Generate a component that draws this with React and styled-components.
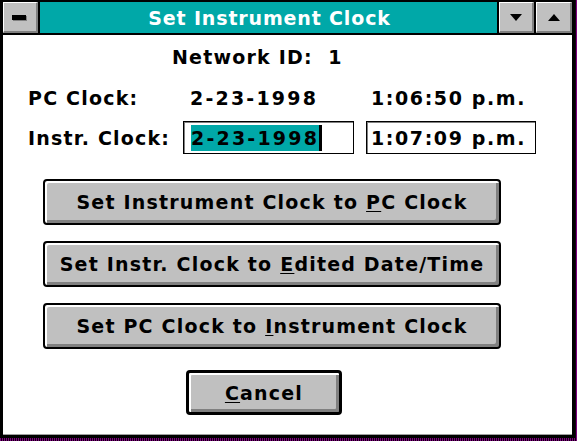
import React from "react";
import styled, { createGlobalStyle } from "styled-components";

const Global = createGlobalStyle`
  html, body { margin: 0; padding: 0; }
  body {
    width: 577px;
    height: 441px;
    overflow: hidden;
    background: repeating-linear-gradient(90deg, #800080 0 1px, #100010 1px 2px);
    font-family: "DejaVu Sans", "Liberation Sans", sans-serif;
  }
`;

const Window = styled.div`
  box-sizing: border-box;
  width: 575px;
  height: 438px;
  border-style: solid;
  border-color: #000;
  border-width: 2px 3px 3px 3px;
  background: #fff;
  display: flex;
  flex-direction: column;
`;

const TitleBar = styled.div`
  height: 31px;
  display: flex;
  border-bottom: 2px solid #000;
  background: #00a8a8;
  flex-shrink: 0;
`;

const CtlBox = styled.div`
  box-sizing: border-box;
  width: ${(p) => p.$w}px;
  height: 31px;
  background: #c0c0c0;
  border-style: solid;
  border-color: #fff #808080 #808080 #fff;
  border-width: 1px 2px 2px 1px;
  display: flex;
  align-items: center;
  justify-content: center;
`;

const Sep = styled.div`
  width: 2px;
  background: #000;
`;

const SysBar = styled.div`
  width: 14px;
  height: 5px;
  background: #000;
  box-shadow: 1px 1px 0 #808080;
  margin-left: -2px;
`;

const TitleText = styled.div`
  flex: 1;
  color: #fff;
  font-weight: bold;
  font-size: 19px;
  letter-spacing: 0.85px;
  display: flex;
  align-items: center;
  justify-content: center;
  padding-left: 2px;
`;

const Content = styled.div`
  flex: 1;
  display: flex;
  flex-direction: column;
  padding-left: 25px;
  border-bottom: 1px solid #a0a0a0;
`;

const Label = styled.div`
  font-weight: bold;
  font-size: 19px;
  letter-spacing: ${(p) => p.$ls ?? 1.2}px;
  color: #000;
  white-space: pre;
  padding-left: ${(p) => p.$pl || 0}px;
`;

const NetRow = styled.div`
  height: 44px;
  display: flex;
  align-items: center;
  padding-left: 144px;
`;

const Row = styled.div`
  display: grid;
  grid-template-columns: 155px 183px 170px;
  align-items: center;
  height: ${(p) => p.$h}px;
  margin-top: ${(p) => p.$mt || 0}px;
`;

const Field = styled.div`
  box-sizing: border-box;
  width: ${(p) => p.$w}px;
  height: 33px;
  border: 1px solid #000;
  box-shadow: inset 1px 1px 0 #808080;
  display: flex;
  align-items: center;
  padding-left: ${(p) => p.$pl}px;
`;

const Sel = styled.span`
  background: #00a8a8;
  color: #000;
  padding: 2px 0;
  box-shadow: 3px 0 0 #000;
`;

const Btn = styled.div`
  box-sizing: border-box;
  width: ${(p) => p.$w}px;
  height: ${(p) => p.$h}px;
  margin-left: ${(p) => p.$ml}px;
  margin-top: ${(p) => p.$mt}px;
  border: ${(p) => (p.$def ? 3 : 2)}px solid #000;
  border-radius: 4px;
  background: #c0c0c0;
  box-shadow: inset 2px 2px 0 #fff, inset -3px -3px 0 #808080;
  display: flex;
  align-items: center;
  justify-content: center;
  font-weight: bold;
  font-size: 19px;
  letter-spacing: 1.2px;
  color: #000;
  white-space: pre;
`;

const U = styled.span`
  text-decoration: underline;
  text-underline-offset: 2px;
`;

const Tri = ({ up }) => (
  <svg width="12" height="7" viewBox="0 0 12 7">
    <polygon points={up ? "0,7 12,7 6,0" : "0,0 12,0 6,7"} fill="#000" />
  </svg>
);

export default function App() {
  return (
    <>
      <Global />
      <Window>
        <TitleBar>
          <CtlBox $w={35}>
            <SysBar />
          </CtlBox>
          <Sep />
          <TitleText>Set Instrument Clock</TitleText>
          <Sep />
          <CtlBox $w={35}>
            <Tri />
          </CtlBox>
          <Sep />
          <CtlBox $w={36}>
            <Tri up />
          </CtlBox>
        </TitleBar>
        <Content>
          <NetRow>
            <Label $ls={1.2}>{"Network ID:  1"}</Label>
          </NetRow>
          <Row $h={38}>
            <Label>PC Clock:</Label>
            <Label $pl={7} $ls={2.2}>2-23-1998</Label>
            <Label $pl={5} $ls={1.6}>1:06:50 p.m.</Label>
          </Row>
          <Row $h={33} $mt={4}>
            <Label>Instr. Clock:</Label>
            <Field $w={171} $pl={7}>
              <Label $ls={2.2}>
                <Sel>2-23-1998</Sel>
              </Label>
            </Field>
            <Field $w={170} $pl={4}>
              <Label $ls={1.6}>1:07:09 p.m.</Label>
            </Field>
          </Row>
          <Btn $w={458} $h={46} $ml={15} $mt={25}>
            Set Instrument Clock to <U>P</U>C Clock
          </Btn>
          <Btn $w={458} $h={46} $ml={15} $mt={16}>
            Set Instr. Clock to <U>E</U>dited Date/Time
          </Btn>
          <Btn $w={458} $h={46} $ml={15} $mt={16}>
            Set PC Clock to <U>I</U>nstrument Clock
          </Btn>
          <Btn $w={156} $h={45} $ml={158} $mt={21} $def>
            <U>C</U>ancel
          </Btn>
        </Content>
      </Window>
    </>
  );
}
